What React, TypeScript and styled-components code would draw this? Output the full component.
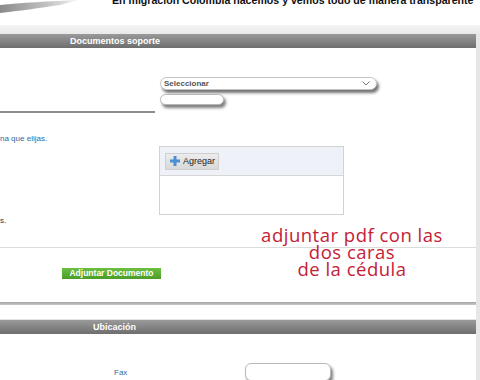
import styled, { createGlobalStyle } from "styled-components";

const GlobalStyle = createGlobalStyle`
  body {
    margin: 0;
    font-family: "Liberation Sans", Arial, sans-serif;
    background: #fff;
  }
`;

const Page = styled.div`
  width: 480px;
  height: 380px;
  overflow: hidden;
  position: relative;
  background: #fff;
`;

const TopHeader = styled.div`
  height: 25px;
  display: flex;
  align-items: flex-start;
  overflow: hidden;
  & > * {
    flex-shrink: 0;
  }
`;

const Title = styled.div`
  margin-top: -6px;
  margin-left: 32px;
  font-size: 10.6px;
  font-weight: bold;
  color: #111;
  white-space: nowrap;
`;

const Band = styled.div`
  height: 9px;
  background: linear-gradient(#f4f4f4, #e9e9e9);
`;

const Panel = styled.div`
  width: 476px;
  border-right: 4px solid #e6e6e6;
`;

const SectionBar = styled.div<{ $indent: number }>`
  height: 14px;
  line-height: 14px;
  padding-left: ${(p) => p.$indent}px;
  background: linear-gradient(#9a9a9a, #6e6e6e);
  color: #fff;
  font-size: 9px;
  font-weight: bold;
`;

const TwoCol = styled.div<{ $h: number }>`
  display: grid;
  grid-template-columns: 159px 1fr;
  height: ${(p) => p.$h}px;
`;

const RuleCell = styled.div`
  display: flex;
  align-items: flex-end;
`;

const ShortRule = styled.div`
  width: 155px;
  height: 2px;
  margin-bottom: 1px;
  background: #8c8c8c;
`;

const Controls = styled.div`
  padding: 29px 0 0 1px;
  display: flex;
  flex-direction: column;
  gap: 4px;
`;

const Select = styled.div`
  width: 206px;
  height: 11px;
  border: 1px solid #c4c4c4;
  border-radius: 7px;
  box-shadow: 2px 3px 3px rgba(0, 0, 0, 0.55);
  display: flex;
  align-items: center;
  justify-content: space-between;
  padding: 0 6px 0 3px;
  font-size: 8px;
  font-weight: bold;
  color: #555;
  background: #fff;
`;

const TextInput = styled.div<{ $w: number; $h: number }>`
  width: ${(p) => p.$w}px;
  height: ${(p) => p.$h}px;
  border: 1px solid #b8b8b8;
  border-radius: 6px;
  box-shadow: 2px 3px 3px rgba(0, 0, 0, 0.5);
  background: #fff;
`;

const HintCol = styled.div`
  display: flex;
  flex-direction: column;
  justify-content: space-between;
  padding: 20px 0 22px;
`;

const Hint = styled.div`
  font-size: 8px;
  color: #2f6aa6;
`;

const Plain = styled.div`
  font-size: 8px;
  color: #333;
`;

const BoxCol = styled.div`
  padding-top: 32px;
`;

const UploadBox = styled.div`
  width: 183px;
  height: 67px;
  border: 1px solid #d2d2d2;
  background: #fff;
`;

const BoxHead = styled.div`
  height: 28px;
  background: #eef2f8;
  border-bottom: 1px solid #d6d6d6;
  display: flex;
  align-items: center;
  padding-left: 5px;
`;

const AddButton = styled.div`
  height: 17px;
  width: 54px;
  display: flex;
  align-items: center;
  gap: 3px;
  padding-left: 4px;
  box-sizing: border-box;
  border: 1px solid #cfcfcf;
  background: linear-gradient(#ececec, #d9d9d9);
  font-size: 9px;
  color: #222;
`;

const ThinRule = styled.div`
  height: 1px;
  background: #dcdcdc;
`;

const ButtonRow = styled.div`
  height: 54px;
  padding: 14px 0 0 62px;
  box-sizing: border-box;
`;

const GreenButton = styled.div`
  display: inline-block;
  width: 99px;
  height: 11px;
  line-height: 11px;
  text-align: center;
  background: linear-gradient(#6cc03f, #4c9c28);
  color: #fff;
  font-size: 8.5px;
  font-weight: bold;
`;

const ThickRule = styled.div`
  height: 3px;
  background: linear-gradient(#a3a3a3, #c8c8c8);
`;

const Gap = styled.div<{ $h: number }>`
  height: ${(p) => p.$h}px;
  border-bottom: 1px solid #e4e4e4;
`;

const FaxRow = styled.div`
  display: grid;
  grid-template-columns: 114px 131px 1fr;
  align-items: center;
  padding-top: 29px;
`;

const FaxLabel = styled.div`
  font-size: 8px;
  color: #2f6aa6;
`;

const Note = styled.div`
  position: absolute;
  left: 246px;
  top: 227px;
  width: 212px;
  text-align: center;
  font-family: "Open Sans", "Liberation Sans", sans-serif;
  font-size: 18.5px;
  letter-spacing: 0.5px;
  line-height: 16.8px;
  color: #c42137;
`;

function Swoosh() {
  return (
    <svg width="80" height="14" viewBox="0 0 80 14">
      <defs>
        <linearGradient id="sw" x1="0" x2="1">
          <stop offset="0" stopColor="#8a8a8a" />
          <stop offset="0.6" stopColor="#c2c2c2" />
          <stop offset="1" stopColor="#f2f2f2" />
        </linearGradient>
      </defs>
      <path d="M0 5 C20 3 50 1 78 0 L60 5 C40 8 18 11 0 13 Z" fill="url(#sw)" />
    </svg>
  );
}

function PlusIcon() {
  return (
    <svg width="10" height="10" viewBox="0 0 10 10">
      <path d="M3.5 0h3v3.5H10v3H6.5V10h-3V6.5H0v-3h3.5z" fill="#4a8fd0" />
    </svg>
  );
}

function Chevron() {
  return (
    <svg width="8" height="5" viewBox="0 0 8 5">
      <path d="M0.5 0.5L4 4L7.5 0.5" fill="none" stroke="#777" strokeWidth="1" />
    </svg>
  );
}

export default function App() {
  return (
    <Page>
      <GlobalStyle />
      <TopHeader>
        <Swoosh />
        <Title>En migración Colombia hacemos y vemos todo de manera transparente</Title>
      </TopHeader>
      <Band />
      <Panel>
        <SectionBar $indent={70}>Documentos soporte</SectionBar>
        <TwoCol $h={66}>
          <RuleCell>
            <ShortRule />
          </RuleCell>
          <Controls>
            <Select>
              Seleccionar
              <Chevron />
            </Select>
            <TextInput $w={62} $h={9} />
          </Controls>
        </TwoCol>
        <TwoCol $h={133}>
          <HintCol>
            <Hint>na que elijas.</Hint>
            <Plain>s.</Plain>
          </HintCol>
          <BoxCol>
            <UploadBox>
              <BoxHead>
                <AddButton>
                  <PlusIcon />
                  Agregar
                </AddButton>
              </BoxHead>
            </UploadBox>
          </BoxCol>
        </TwoCol>
        <ThinRule />
        <ButtonRow>
          <GreenButton>Adjuntar Documento</GreenButton>
        </ButtonRow>
        <ThickRule />
        <Gap $h={14} />
        <SectionBar $indent={93}>Ubicación</SectionBar>
        <FaxRow>
          <span />
          <FaxLabel>Fax</FaxLabel>
          <TextInput $w={84} $h={16} />
        </FaxRow>
      </Panel>
      <Note>
        adjuntar pdf con las
        <br />
        dos caras
        <br />
        de la cédula
      </Note>
    </Page>
  );
}
